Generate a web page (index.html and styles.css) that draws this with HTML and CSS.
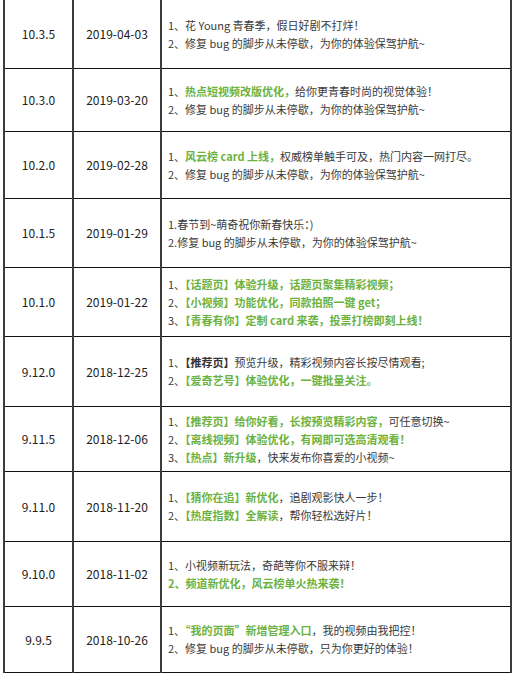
FILE: index.html
```html
<!DOCTYPE html>
<html lang="zh-CN">
<head>
<meta charset="utf-8">
<title>版本更新记录</title>
<link rel="stylesheet" href="styles.css">
</head>
<body>
<table class="log">
  <colgroup>
    <col class="c-ver">
    <col class="c-date">
    <col class="c-desc">
  </colgroup>
  <tbody>
    <tr class="h68">
      <td class="ver">10.3.5</td>
      <td class="date">2019-04-03</td>
      <td class="desc"><p>1、花 Young 青春季，假日好剧不打烊！</p><p>2、修复 bug 的脚步从未停歇，为你的体验保驾护航~</p></td>
    </tr>
    <tr class="h63">
      <td class="ver">10.3.0</td>
      <td class="date">2019-03-20</td>
      <td class="desc"><p>1、<span class="hl">热点短视频改版优化，</span>给你更青春时尚的视觉体验！</p><p>2、修复 bug 的脚步从未停歇，为你的体验保驾护航~</p></td>
    </tr>
    <tr class="h67">
      <td class="ver">10.2.0</td>
      <td class="date">2019-02-28</td>
      <td class="desc"><p>1、<span class="hl">风云榜 card 上线，</span>权威榜单触手可及，热门内容一网打尽。</p><p>2、修复 bug 的脚步从未停歇，为你的体验保驾护航~</p></td>
    </tr>
    <tr class="h69">
      <td class="ver">10.1.5</td>
      <td class="date">2019-01-29</td>
      <td class="desc"><p>1.春节到~萌奇祝你新春快乐：)</p><p>2.修复 bug 的脚步从未停歇，为你的体验保驾护航~</p></td>
    </tr>
    <tr class="h69">
      <td class="ver">10.1.0</td>
      <td class="date">2019-01-22</td>
      <td class="desc"><p>1、<span class="hl">【话题页】体验升级，话题页聚集精彩视频；</span></p><p>2、<span class="hl">【小视频】功能优化，同款拍照一键 get；</span></p><p>3、<span class="hl">【青春有你】定制 card 来袭，投票打榜即刻上线！</span></p></td>
    </tr>
    <tr class="h70">
      <td class="ver">9.12.0</td>
      <td class="date">2018-12-25</td>
      <td class="desc"><p>1、<span class="em">【推荐页】</span>预览升级，精彩视频内容长按尽情观看;</p><p>2、<span class="hl">【爱奇艺号】体验优化，一键批量关注。</span></p></td>
    </tr>
    <tr class="h65">
      <td class="ver">9.11.5</td>
      <td class="date">2018-12-06</td>
      <td class="desc"><p>1、<span class="hl">【推荐页】给你好看，长按预览精彩内容，</span>可任意切换~</p><p>2、<span class="hl">【离线视频】体验优化，有网即可选高清观看！</span></p><p>3、<span class="hl">【热点】新升级</span>，快来发布你喜爱的小视频~</p></td>
    </tr>
    <tr class="h70">
      <td class="ver">9.11.0</td>
      <td class="date">2018-11-20</td>
      <td class="desc"><p>1、<span class="hl">【猜你在追】新优化</span>，追剧观影快人一步！</p><p>2、<span class="hl">【热度指数】全解读</span>，帮你轻松选好片！</p></td>
    </tr>
    <tr class="h65">
      <td class="ver">9.10.0</td>
      <td class="date">2018-11-02</td>
      <td class="desc"><p>1、小视频新玩法，奇葩等你不服来辩！</p><p><span class="hl">2、频道新优化，风云榜单火热来袭！</span></p></td>
    </tr>
    <tr class="h66">
      <td class="ver">9.9.5</td>
      <td class="date">2018-10-26</td>
      <td class="desc"><p>1、<span class="hl">“我的页面”新增管理入口</span>，我的视频由我把控！</p><p>2、修复 bug 的脚步从未停歇，只为你更好的体验！</p></td>
    </tr>
  </tbody>
</table>
</body>
</html>
```

FILE: styles.css
```css
html, body {
  margin: 0;
  padding: 0;
  background: #ffffff;
}

body {
  font-family: "Noto Sans CJK SC", "Noto Sans", sans-serif;
  color: #333333;
}

.log {
  margin-left: 3px;
  width: 507px;
  border-collapse: collapse;
  table-layout: fixed;
}

.c-ver { width: 69px; }
.c-date { width: 88px; }
.c-desc { width: 350px; }

.log td {
  border-left: 2px solid #3c3c3c;
  border-right: 2px solid #3c3c3c;
  border-bottom: 1px solid #111111;
  vertical-align: middle;
  padding: 0;
}

.ver, .date {
  text-align: center;
  font-size: 12px;
  color: #222222;
}

.desc {
  padding-left: 6px !important;
  font-size: 11px;
  line-height: 18px;
  color: #3a3a3a;
}

.desc p {
  margin: 0;
  white-space: nowrap;
}

.hl {
  color: #6cb23e;
  font-weight: 600;
}

.em {
  font-weight: 600;
  color: #333333;
}

.h63 { height: 63px; }
.h65 { height: 65px; }
.h66 { height: 66px; }
.h67 { height: 67px; }
.h68 { height: 68px; }
.h69 { height: 69px; }
.h70 { height: 70px; }
```
